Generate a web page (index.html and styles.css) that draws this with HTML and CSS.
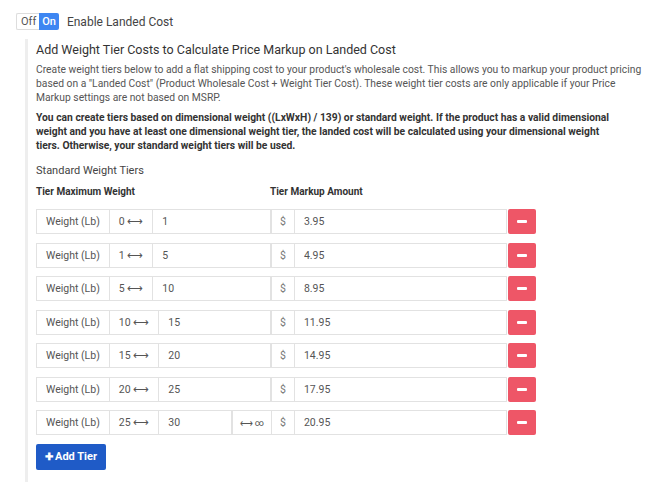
FILE: index.html
```html
<!DOCTYPE html>
<html lang="en">
<head>
    <meta charset="UTF-8">
    <meta name="viewport" content="width=device-width, initial-scale=1.0">
    <title>Landed Cost</title>
    <link rel="stylesheet" href="styles.css">
</head>
<body>
    <div class="setting">
        <div class="toggle">
            <span class="toggle-off">Off</span>
            <span class="toggle-on">On</span>
        </div>
        <span class="setting-label">Enable Landed Cost</span>
    </div>

    <div class="panel">
        <h3>Add Weight Tier Costs to Calculate Price Markup on Landed Cost</h3>
        <p class="help">Create weight tiers below to add a flat shipping cost to your product's wholesale cost. This allows you to markup your product pricing based on a "Landed Cost" (Product Wholesale Cost + Weight Tier Cost). These weight tier costs are only applicable if your Price Markup settings are not based on MSRP.</p>
        <p class="note">You can create tiers based on dimensional weight ((LxWxH) / 139) or standard weight. If the product has a valid dimensional weight and you have at least one dimensional weight tier, the landed cost will be calculated using your dimensional weight tiers. Otherwise, your standard weight tiers will be used.</p>

        <h4>Standard Weight Tiers</h4>
        <div class="tier-head">
            <span>Tier Maximum Weight</span>
            <span>Tier Markup Amount</span>
        </div>

        <div class="tier">
            <div class="group">
                <span class="addon">Weight (Lb)</span>
                <span class="addon">0 &#10231;</span>
                <input class="field" type="text" value="1">
            </div>
            <div class="group">
                <span class="addon dollar">$</span>
                <input class="field" type="text" value="3.95">
            </div>
            <button class="remove" type="button"><span></span></button>
        </div>
        <div class="tier">
            <div class="group">
                <span class="addon">Weight (Lb)</span>
                <span class="addon">1 &#10231;</span>
                <input class="field" type="text" value="5">
            </div>
            <div class="group">
                <span class="addon dollar">$</span>
                <input class="field" type="text" value="4.95">
            </div>
            <button class="remove" type="button"><span></span></button>
        </div>
        <div class="tier">
            <div class="group">
                <span class="addon">Weight (Lb)</span>
                <span class="addon">5 &#10231;</span>
                <input class="field" type="text" value="10">
            </div>
            <div class="group">
                <span class="addon dollar">$</span>
                <input class="field" type="text" value="8.95">
            </div>
            <button class="remove" type="button"><span></span></button>
        </div>
        <div class="tier">
            <div class="group">
                <span class="addon">Weight (Lb)</span>
                <span class="addon">10 &#10231;</span>
                <input class="field" type="text" value="15">
            </div>
            <div class="group">
                <span class="addon dollar">$</span>
                <input class="field" type="text" value="11.95">
            </div>
            <button class="remove" type="button"><span></span></button>
        </div>
        <div class="tier">
            <div class="group">
                <span class="addon">Weight (Lb)</span>
                <span class="addon">15 &#10231;</span>
                <input class="field" type="text" value="20">
            </div>
            <div class="group">
                <span class="addon dollar">$</span>
                <input class="field" type="text" value="14.95">
            </div>
            <button class="remove" type="button"><span></span></button>
        </div>
        <div class="tier">
            <div class="group">
                <span class="addon">Weight (Lb)</span>
                <span class="addon">20 &#10231;</span>
                <input class="field" type="text" value="25">
            </div>
            <div class="group">
                <span class="addon dollar">$</span>
                <input class="field" type="text" value="17.95">
            </div>
            <button class="remove" type="button"><span></span></button>
        </div>
        <div class="tier">
            <div class="group">
                <span class="addon">Weight (Lb)</span>
                <span class="addon">25 &#10231;</span>
                <input class="field" type="text" value="30">
                <span class="addon infinity">&#10231; &infin;</span>
            </div>
            <div class="group">
                <span class="addon dollar">$</span>
                <input class="field" type="text" value="20.95">
            </div>
            <button class="remove" type="button"><span></span></button>
        </div>

        <button class="add-tier" type="button"><span class="plus">&#10010;</span>Add Tier</button>
    </div>
</body>
</html>
```

FILE: styles.css
```css
html, body {
    margin: 0;
    padding: 0;
}
body {
    font-family: Roboto, "Liberation Sans", sans-serif;
    color: #444;
    background: #fff;
    padding: 13px 0 0 16px;
}
.setting {
    display: flex;
    align-items: center;
    gap: 8px;
    height: 17px;
}
.toggle {
    display: flex;
    height: 17px;
    font-size: 11px;
    line-height: 17px;
}
.toggle-off {
    padding: 0 3px 0 4px;
    border: 1px solid #ddd;
    border-right: none;
    border-radius: 2px 0 0 2px;
    line-height: 15px;
    color: #555;
}
.toggle-on {
    padding: 0 3px;
    background: #3d86f2;
    color: #fff;
    font-weight: 500;
    border-radius: 0 2px 2px 0;
}
.setting-label {
    font-size: 12px;
    color: #444;
}
.panel {
    margin: 9px 0 0 9px;
    border-left: 3px solid #eeeeee;
    padding: 3px 0 12px 8px;
    width: 500px;
}
h3 {
    margin: 0 0 6px;
    font-size: 12.5px;
    font-weight: 400;
    color: #333;
}
.help {
    margin: 0 0 6px;
    font-size: 10.3px;
    line-height: 14px;
    color: #555;
    width: 615px;
}
.note {
    margin: 0 0 11px;
    font-size: 10.3px;
    line-height: 14px;
    font-weight: 700;
    color: #333;
    width: 588px;
}
h4 {
    margin: 0 0 9px;
    font-size: 11px;
    font-weight: 400;
    color: #444;
}
.tier-head {
    display: grid;
    grid-template-columns: 234px 1fr;
    font-size: 10px;
    font-weight: 700;
    color: #333;
    margin-bottom: 12px;
}
.tier {
    display: grid;
    grid-template-columns: 235px 236px 28px;
    height: 25px;
    margin-bottom: 8.5px;
}
.group {
    display: flex;
    height: 25px;
}
.addon {
    display: flex;
    align-items: center;
    padding: 0 9px;
    border: 1px solid #e2e2e2;
    border-right: none;
    font-size: 10.5px;
    color: #555;
    white-space: nowrap;
    box-sizing: border-box;
}
.addon.dollar {
    padding: 0 8px;
    color: #777;
}
.addon.infinity {
    font-size: 9px;
    padding: 0 7px;
}
.field {
    flex: 1;
    min-width: 0;
    height: 25px;
    box-sizing: border-box;
    border: 1px solid #e2e2e2;
    padding: 0 9px;
    font-family: inherit;
    font-size: 10.5px;
    color: #555;
    outline: none;
}
.remove {
    margin-left: 1px;
    width: 28px;
    height: 25px;
    border: none;
    border-radius: 2px;
    background: #ee5667;
    display: flex;
    align-items: center;
    justify-content: center;
    padding: 0;
}
.remove span {
    display: block;
    width: 10px;
    height: 3px;
    background: #fff;
    border-radius: 1px;
}
.add-tier {
    height: 26px;
    padding: 0 9px;
    background: #1f5bc7;
    color: #fff;
    border: none;
    border-radius: 2px;
    font-family: inherit;
    font-size: 11px;
    font-weight: 700;
}
.plus {
    margin-right: 2px;
    font-size: 10px;
}
```
